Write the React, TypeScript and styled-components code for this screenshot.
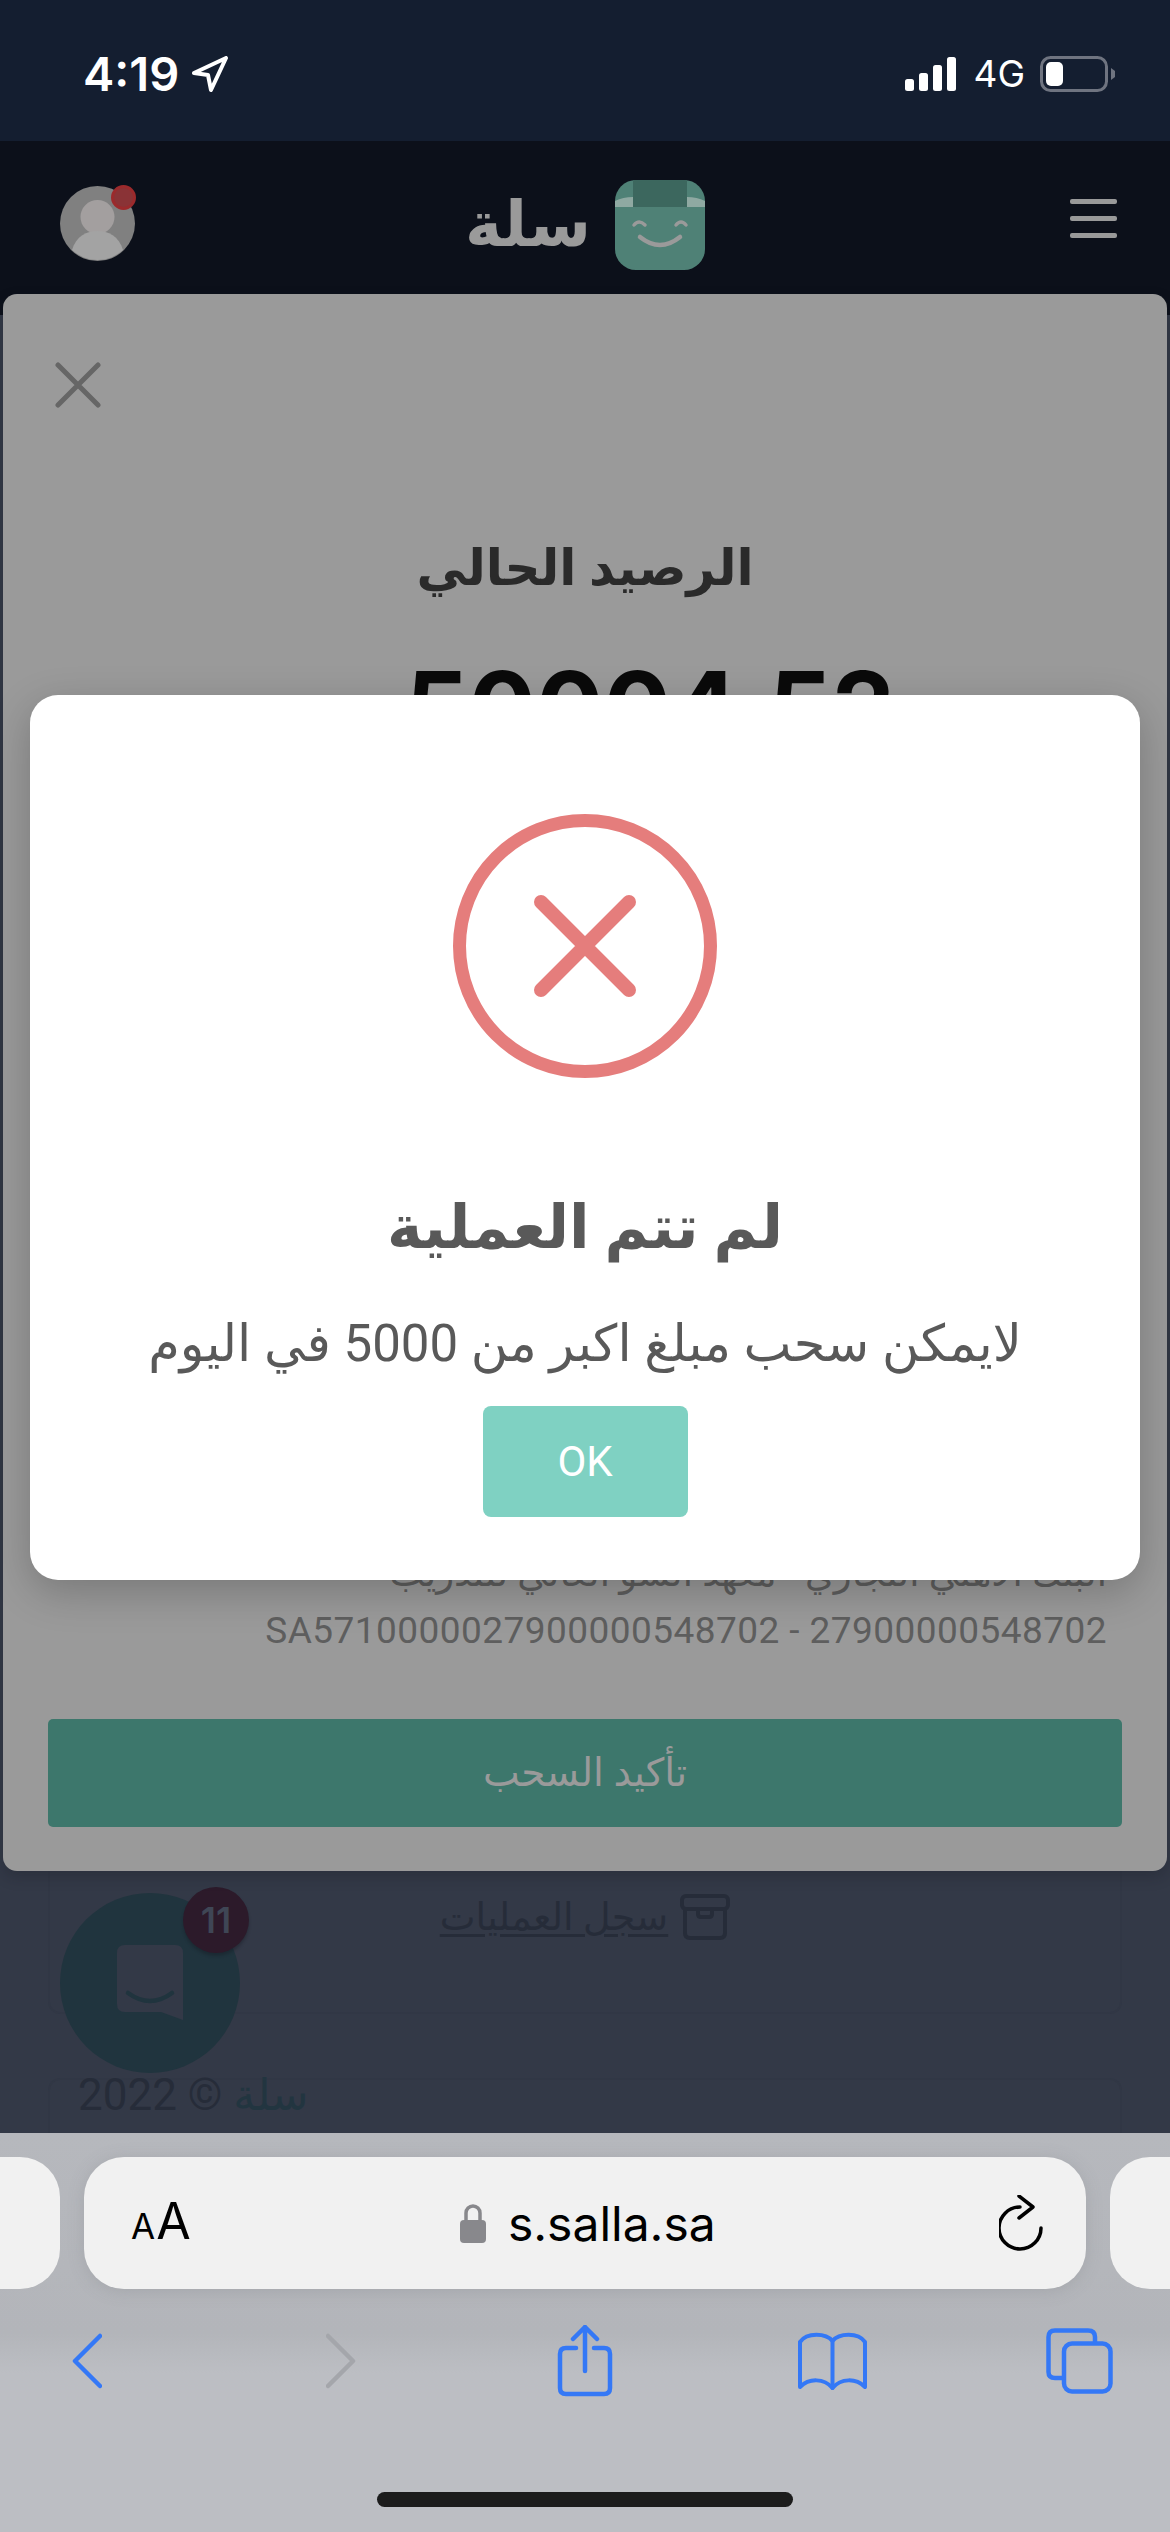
import styled, { createGlobalStyle } from 'styled-components'

const arabicFont = `Roboto, "DejaVu Sans", sans-serif`

const GlobalStyle = createGlobalStyle`
  html, body {
    margin: 0;
    padding: 0;
    background: #333947;
  }
  * {
    box-sizing: border-box;
  }
`

const Screen = styled.div`
  width: 1170px;
  height: 2532px;
  display: flex;
  flex-direction: column;
  overflow: hidden;
  font-family: Inter, sans-serif;
`

const StatusBar = styled.div`
  height: 141px;
  flex-shrink: 0;
  background: #141e30;
  display: flex;
  justify-content: space-between;
  align-items: flex-start;
  padding: 56px 55px 0 83px;
  color: #fff;
`

const StatusGroup = styled.div`
  display: flex;
  align-items: center;
  height: 36px;
`

const Clock = styled.span`
  font-size: 47px;
  font-weight: 600;
  line-height: 36px;
  margin-right: 13px;
`

const Network = styled.span`
  font-size: 37px;
  font-weight: 400;
  line-height: 36px;
  margin: 0 15px 0 17px;
`

const WebView = styled.div`
  position: relative;
  flex: 1;
  min-height: 0;
  display: flex;
  flex-direction: column;
  overflow: hidden;
  background: #333947;
`

const Nav = styled.header`
  height: 174px;
  flex-shrink: 0;
  background: #0c101a;
  display: grid;
  grid-template-columns: 1fr auto 1fr;
  align-items: start;
  padding: 0 53px 0 60px;
`

const Avatar = styled.div`
  position: relative;
  width: 75px;
  height: 75px;
  margin-top: 45px;
`

const AvatarDot = styled.span`
  position: absolute;
  top: -1px;
  right: -1px;
  width: 25px;
  height: 25px;
  border-radius: 50%;
  background: #8a3336;
  border: 3px solid #9b2a2c;
`

const Brand = styled.div`
  display: flex;
  align-items: center;
  gap: 24px;
  margin: 39px 7px 0 0;
`

const BrandName = styled.span`
  font-family: ${arabicFont};
  font-size: 63px;
  font-weight: 700;
  line-height: 90px;
  color: #9a9a9a;
`

const Burger = styled.div`
  justify-self: end;
  width: 47px;
  margin-top: 58px;
  display: flex;
  flex-direction: column;
  gap: 12px;
`

const BurgerLine = styled.span`
  height: 5px;
  border-radius: 2px;
  background: #999;
`

const Main = styled.main`
  flex: 1;
  min-height: 0;
  display: flex;
  flex-direction: column;
  gap: 64px;
  padding: 0 48px;
`

const Panel = styled.section`
  height: 1699px;
  flex-shrink: 0;
  display: flex;
  align-items: flex-end;
  justify-content: center;
  padding-bottom: 72px;
  border: 2px solid #313745;
  border-top: 0;
  border-radius: 0 0 12px 12px;
`

const HistoryLink = styled.a`
  display: flex;
  align-items: center;
  gap: 12px;
  color: #262c39;
  font-family: ${arabicFont};
  font-size: 38px;
  line-height: 46px;
  text-decoration: underline;
  text-underline-offset: 4px;
`

const FooterPanel = styled.footer`
  height: 80px;
  flex-shrink: 0;
  padding: 0 28px;
  border: 2px solid #313745;
  border-bottom: 0;
  border-radius: 12px 12px 0 0;
  font-family: ${arabicFont};
  font-size: 44px;
  letter-spacing: 1px;
  line-height: 30px;
  color: #262c39;
`

const FooterBrand = styled.span`
  color: #223540;
`

const ChatButton = styled.div`
  position: absolute;
  left: 60px;
  top: 1752px;
  width: 180px;
  height: 180px;
  border-radius: 50%;
  background: #20343e;
  display: flex;
  align-items: center;
  justify-content: center;
`

const ChatBadge = styled.span`
  position: absolute;
  top: -6px;
  right: -9px;
  width: 66px;
  height: 66px;
  border-radius: 50%;
  background: #2c1a2a;
  box-shadow: 0 3px 3px rgba(20, 24, 32, 0.35);
  color: #3f4655;
  font-size: 36px;
  font-weight: 600;
  line-height: 66px;
  text-align: center;
`

const Sheet = styled.section`
  position: absolute;
  top: 153px;
  left: 3px;
  width: 1164px;
  height: 1577px;
  display: flex;
  flex-direction: column;
  padding: 68px 45px 44px;
  background: #9a9a9a;
  border-radius: 14px;
  box-shadow: 0 6px 14px rgba(20, 24, 32, 0.25);
`

const CloseIcon = styled.svg`
  width: 46px;
  height: 46px;
  margin-left: 7px;
  flex-shrink: 0;
`

const BalanceLabel = styled.h2`
  margin: 122px 0 0;
  text-align: center;
  font-family: ${arabicFont};
  font-size: 50px;
  font-weight: 700;
  line-height: 76px;
  color: #2a2a2a;
`

const BalanceValue = styled.div`
  margin: 52px 0 0 130px;
  text-align: center;
  font-family: Inter, sans-serif;
  font-size: 100px;
  font-weight: 700;
  line-height: 100px;
  color: #0a0a0a;
`

const BankDetails = styled.div`
  margin-top: auto;
  padding-right: 15px;
  text-align: right;
  font-family: ${arabicFont};
  color: #5e5e5e;
`

const BankName = styled.div`
  font-size: 37px;
  line-height: 50px;
  margin-bottom: 12px;
`

const BankAccount = styled.div`
  font-size: 37px;
  letter-spacing: 0.45px;
  line-height: 40px;
  direction: ltr;
`

const ConfirmButton = styled.button`
  height: 108px;
  flex-shrink: 0;
  margin-top: 68px;
  border: 0;
  border-radius: 5px;
  background: #3d776c;
  color: #9a9a9a;
  font-family: ${arabicFont};
  font-size: 39px;
`

const Alert = styled.div`
  position: absolute;
  top: 554px;
  left: 30px;
  width: 1110px;
  height: 885px;
  display: flex;
  flex-direction: column;
  align-items: center;
  padding-top: 119px;
  background: #fff;
  border-radius: 28px;
  box-shadow: 0 12px 40px rgba(0, 0, 0, 0.22);
`

const AlertTitle = styled.h2`
  margin: 115px 0 0;
  font-family: ${arabicFont};
  font-size: 60px;
  font-weight: 700;
  line-height: 70px;
  color: #595959;
`

const AlertMessage = styled.p`
  margin: 51px 0 0;
  font-family: ${arabicFont};
  font-size: 51px;
  line-height: 60px;
  color: #595959;
`

const AlertButton = styled.button`
  width: 205px;
  height: 111px;
  margin-top: 32px;
  border: 0;
  border-radius: 8px;
  background: #7fd1c2;
  color: #fff;
  font-family: Roboto, sans-serif;
  font-size: 42px;
`

const BrowserBar = styled.div`
  height: 399px;
  flex-shrink: 0;
  display: flex;
  flex-direction: column;
  align-items: center;
  background: linear-gradient(#b6b8bd 0, #b3b5ba 200px, #bcbec3 240px);
`

const UrlRow = styled.div`
  width: 100%;
  display: flex;
  gap: 24px;
  margin-top: 24px;
  justify-content: center;
`

const SidePill = styled.div`
  width: 360px;
  height: 132px;
  flex-shrink: 0;
  background: #f1f1f1;
  border-radius: 40px;
`

const UrlPill = styled.div`
  width: 1002px;
  height: 132px;
  flex-shrink: 0;
  display: flex;
  align-items: center;
  padding: 0 43px 0 47px;
  background: #f1f1f1;
  border-radius: 40px;
  box-shadow: 0 2px 16px rgba(120, 122, 128, 0.25);
`

const FontToggle = styled.span`
  display: flex;
  align-items: baseline;
  gap: 1px;
  color: #000;
  font-family: Inter, sans-serif;
`

const FontLetter = styled.span<{ $size: number }>`
  font-size: ${(p) => p.$size}px;
  line-height: 50px;
`

const Address = styled.div`
  flex: 1;
  display: flex;
  align-items: center;
  justify-content: center;
  gap: 22px;
  margin-right: 14px;
  font-size: 48px;
  color: #000;
`

const Toolbar = styled.nav`
  width: 100%;
  display: grid;
  grid-template-columns: 254px 231px 240px 249px auto;
  align-items: center;
  height: 72px;
  margin-top: 36px;
  padding-left: 72px;
`

const HomeIndicator = styled.div`
  width: 416px;
  height: 15px;
  margin-top: 95px;
  border-radius: 8px;
  background: #1c1c1c;
`

export default function App() {
  return (
    <Screen>
      <GlobalStyle />
      <StatusBar>
        <StatusGroup>
          <Clock>4:19</Clock>
          <svg width="37" height="36" viewBox="0 0 37 36" fill="none">
            <path d="M2 17 L34 2 L19 34 L16 19 Z" stroke="#fff" strokeWidth="4" strokeLinejoin="round" />
          </svg>
        </StatusGroup>
        <StatusGroup>
          <svg width="51" height="34" viewBox="0 0 51 34" fill="#fff">
            <rect x="0" y="22" width="9" height="12" rx="2.5" />
            <rect x="14" y="16" width="9" height="18" rx="2.5" />
            <rect x="28" y="8" width="9" height="26" rx="2.5" />
            <rect x="42" y="0" width="9" height="34" rx="2.5" />
          </svg>
          <Network>4G</Network>
          <svg width="75" height="36" viewBox="0 0 75 36" fill="none">
            <rect x="1.5" y="1.5" width="65" height="33" rx="9" stroke="#6f7480" strokeWidth="3" />
            <rect x="6" y="6" width="17" height="24" rx="5" fill="#fff" />
            <path d="M71 12 L75 15 V21 L71 24 Z" fill="#6f7480" />
          </svg>
        </StatusGroup>
      </StatusBar>

      <WebView>
        <Nav>
          <Avatar>
            <svg width="75" height="75" viewBox="0 0 75 75">
              <circle cx="37.5" cy="37.5" r="37.5" fill="#808080" />
              <circle cx="37.5" cy="31" r="17" fill="#a39f9f" />
              <path d="M12 64 C16 50 27 45 37.5 45 C48 45 59 50 63 64 A37.5 37.5 0 0 1 12 64 Z" fill="#a3a3a3" />
            </svg>
            <AvatarDot />
          </Avatar>
          <Brand>
            <BrandName dir="rtl">سلة</BrandName>
            <svg width="90" height="90" viewBox="0 0 90 90">
              <rect width="90" height="90" rx="21" fill="#4f8176" />
              <path d="M18 0 H72 V27 H18 Z" fill="#3c675e" />
              <path d="M0 21 Q8 17 18 17 V27 H0 Z M72 17 Q82 17 90 21 V27 H72 Z" fill="#8fa9a2" />
              <path d="M19 45 Q24 39 30 45 M61 45 Q66 39 71 45" stroke="#9a9a9a" strokeWidth="3.5" strokeLinecap="round" fill="none" />
              <path d="M25 57 Q45 73 65 57" stroke="#9a9a9a" strokeWidth="4.5" strokeLinecap="round" fill="none" />
            </svg>
          </Brand>
          <Burger>
            <BurgerLine />
            <BurgerLine />
            <BurgerLine />
          </Burger>
        </Nav>

        <Main>
          <Panel>
            <HistoryLink dir="rtl">
              <svg width="50" height="46" viewBox="0 0 50 46" fill="none" stroke="#262c39" strokeWidth="4">
                <rect x="2" y="2" width="46" height="13" rx="4" />
                <path d="M5 15 V39 Q5 44 10 44 H40 Q45 44 45 39 V15" />
                <path d="M18 15 V20 Q18 23 21 23 H29 Q32 23 32 20 V15" />
              </svg>
              سجل العمليات
            </HistoryLink>
          </Panel>
          <FooterPanel>
            2022 © <FooterBrand dir="rtl">سلة</FooterBrand>
          </FooterPanel>
        </Main>

        <ChatButton>
          <svg width="66" height="76" viewBox="0 0 66 76">
            <path d="M8 0 H58 Q66 0 66 8 V75 L44 67 H8 Q0 67 0 59 V8 Q0 0 8 0 Z" fill="#333947" />
            <path d="M11 48 Q33 64 55 48" stroke="#20343e" strokeWidth="4.5" strokeLinecap="round" fill="none" />
          </svg>
          <ChatBadge>11</ChatBadge>
        </ChatButton>

        <Sheet>
          <CloseIcon viewBox="0 0 46 46">
            <path d="M3 3 L43 43 M43 3 L3 43" stroke="#666" strokeWidth="5" strokeLinecap="round" />
          </CloseIcon>
          <BalanceLabel dir="rtl">الرصيد الحالي</BalanceLabel>
          <BalanceValue>50004.52</BalanceValue>
          <BankDetails>
            <BankName dir="rtl">البنك الأهلي التجاري - معهد السو العالي للتدريب</BankName>
            <BankAccount>SA5710000027900000548702 - 27900000548702</BankAccount>
          </BankDetails>
          <ConfirmButton dir="rtl">تأكيد السحب</ConfirmButton>
        </Sheet>

        <Alert>
          <svg width="264" height="264" viewBox="0 0 264 264" fill="none" stroke="#e57d7c">
            <circle cx="132" cy="132" r="125.5" strokeWidth="13" />
            <path d="M88 88 L176 176 M176 88 L88 176" strokeWidth="14" strokeLinecap="round" />
          </svg>
          <AlertTitle dir="rtl">لم تتم العملية</AlertTitle>
          <AlertMessage dir="rtl">لايمكن سحب مبلغ اكبر من 5000 في اليوم</AlertMessage>
          <AlertButton>OK</AlertButton>
        </Alert>
      </WebView>

      <BrowserBar>
        <UrlRow>
          <SidePill />
          <UrlPill>
            <FontToggle>
              <FontLetter $size={35}>A</FontLetter>
              <FontLetter $size={50}>A</FontLetter>
            </FontToggle>
            <Address>
              <svg width="26" height="39" viewBox="0 0 26 39" fill="none">
                <path d="M6 18 V9 A7 7 0 0 1 20 9 V18" stroke="#88888c" strokeWidth="3.5" />
                <rect x="0" y="16" width="26" height="23" rx="4" fill="#88888c" />
              </svg>
              s.salla.sa
            </Address>
            <svg width="44" height="56" viewBox="0 0 44 56" fill="none" stroke="#000" strokeWidth="3.5" strokeLinecap="round" strokeLinejoin="round">
              <path d="M21 12 A21 21 0 1 0 42 33" />
              <path d="M20 1 L34 12 L20 23" />
            </svg>
          </UrlPill>
          <SidePill />
        </UrlRow>
        <Toolbar>
          <svg width="30" height="56" viewBox="0 0 30 56" fill="none" stroke="#3478f6" strokeWidth="4.5" strokeLinecap="round" strokeLinejoin="round">
            <path d="M28 3 L3 28 L28 53" />
          </svg>
          <svg width="30" height="56" viewBox="0 0 30 56" fill="none" stroke="#a4a6ab" strokeWidth="4.5" strokeLinecap="round" strokeLinejoin="round">
            <path d="M2 3 L27 28 L2 53" />
          </svg>
          <svg width="56" height="72" viewBox="0 0 56 72" fill="none" stroke="#3478f6" strokeWidth="4.5" strokeLinecap="round" strokeLinejoin="round">
            <path d="M19 23 H9 Q3 23 3 29 V63 Q3 69 9 69 H47 Q53 69 53 63 V29 Q53 23 47 23 H37" />
            <path d="M28 46 V2 M16 14 L28 2 L40 14" />
          </svg>
          <svg width="71" height="58" viewBox="0 0 71 58" fill="none" stroke="#3478f6" strokeWidth="4" strokeLinecap="round" strokeLinejoin="round">
            <path d="M35.5 9 C29 1 10 0 3 10 V55 C12 46 27 46 35.5 56 C44 46 59 46 68 55 V10 C61 0 42 1 35.5 9 Z" />
            <path d="M35.5 9 V56" />
          </svg>
          <svg width="67" height="66" viewBox="0 0 67 66" fill="none" stroke="#3478f6" strokeWidth="4.5" strokeLinejoin="round">
            <path d="M16 50 H9 Q2.5 50 2.5 44 V9 Q2.5 2.5 9 2.5 H42 Q49 2.5 49 9 V15" />
            <rect x="18" y="15.5" width="46.5" height="48" rx="8" />
          </svg>
        </Toolbar>
        <HomeIndicator />
      </BrowserBar>
    </Screen>
  )
}
